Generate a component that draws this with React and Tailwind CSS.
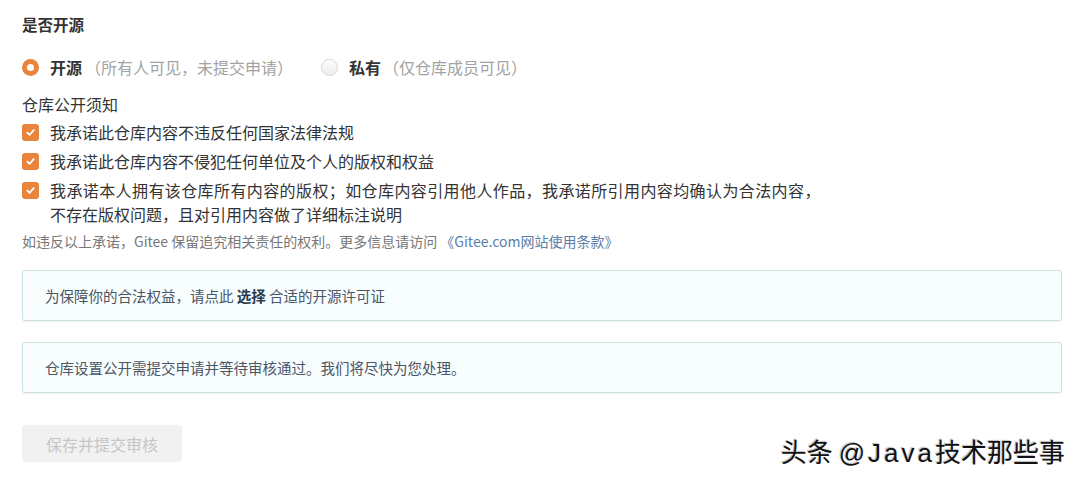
import React from 'react';

function Checkbox() {
  return (
    <span className="flex h-[17px] w-[17px] shrink-0 items-center justify-center rounded-[3px] bg-[#e8843b]">
      <svg viewBox="0 0 12 12" className="h-[11px] w-[11px]" fill="none" stroke="#fff" strokeWidth="2" strokeLinecap="round" strokeLinejoin="round">
        <path d="M2.5 6.2 L5 8.5 L9.5 3.5" />
      </svg>
    </span>
  );
}

export default function App() {
  const promises = [
    '我承诺此仓库内容不违反任何国家法律法规',
    '我承诺此仓库内容不侵犯任何单位及个人的版权和权益',
  ];

  return (
    <div className="relative h-[482px] w-[1080px] overflow-hidden bg-white font-['Noto_Sans_CJK_SC','Noto_Sans',sans-serif] text-[#333]">
      <div className="flex flex-col pl-[22px] pr-[18px] pt-[13px]">
        {/* 是否开源 */}
        <div className="text-[15.5px] font-bold leading-[22px]">是否开源</div>

        <div className="mt-[21px] flex h-[22px] items-center text-[16px]">
          <span className="flex h-[17px] w-[17px] items-center justify-center rounded-full bg-[#e8843b]">
            <span className="h-[7px] w-[7px] rounded-full bg-white" />
          </span>
          <span className="ml-[11px] font-bold">开源</span>
          <span className="ml-[3px] text-[#a3a3a3]">（所有人可见，未提交申请）</span>

          <span className="ml-[28px] h-[17px] w-[17px] rounded-full border border-[#d6d6d6] bg-gradient-to-b from-white to-[#ececec]" />
          <span className="ml-[11px] font-bold">私有</span>
          <span className="ml-[2px] text-[#a3a3a3]">（仅仓库成员可见）</span>
        </div>

        <div className="mt-[15px] text-[16px] leading-[22px]">仓库公开须知</div>

        <div className="mt-[5px] flex flex-col gap-[5px] text-[16px] leading-[24px]">
          {promises.map((t) => (
            <div key={t} className="flex items-center gap-[11px]">
              <Checkbox />
              <span>{t}</span>
            </div>
          ))}
          <div className="flex items-start gap-[11px]">
            <span className="mt-[4px]">
              <Checkbox />
            </span>
            <span>
              <span className="tracking-[0.4px]">我承诺本人拥有该仓库所有内容的版权；如仓库内容引用他人作品，我承诺所引用内容均确认为合法内容，</span>
              <br />
              不存在版权问题，且对引用内容做了详细标注说明
            </span>
          </div>
        </div>

        <div className="mt-[5px] text-[14px] leading-[20px] text-[#777]">
          如违反以上承诺，Gitee 保留追究相关责任的权利。更多信息请访问 <span className="text-[#5a7ea8]">《Gitee.com网站使用条款》</span>
        </div>

        <div className="mt-[19px] flex h-[51px] items-center rounded-[3px] border border-[#cde0e4] bg-[#f8fdfe] px-[22px] text-[14.5px] text-[#4a5566] shadow-[0_1px_2px_rgba(0,0,0,0.06)]">
          为保障你的合法权益，请点此&nbsp;<span className="font-bold text-[#2b3b4e]">选择</span>&nbsp;合适的开源许可证
        </div>

        <div className="mt-[21px] flex h-[51px] items-center rounded-[3px] border border-[#cde0e4] bg-[#f8fdfe] px-[22px] text-[14.5px] text-[#4a5566] shadow-[0_1px_2px_rgba(0,0,0,0.06)]">
          仓库设置公开需提交申请并等待审核通过。我们将尽快为您处理。
        </div>

        <div className="mt-[32px] flex h-[37px] w-[160px] items-center justify-center rounded-[3px] bg-[#f1f1f1] text-[16px] text-[#c6c6c6]">
          保存并提交审核
        </div>
      </div>

      {/* 水印 */}
      <div className="absolute bottom-[14px] right-[15px] text-[26px] leading-[30px] text-[#111] [text-shadow:1px_1px_1px_#fff,-1px_-1px_1px_#bbb]">
        头条 <span className="font-['Liberation_Sans',sans-serif] tracking-[3px]">@Java</span>技术那些事
      </div>
    </div>
  );
}
